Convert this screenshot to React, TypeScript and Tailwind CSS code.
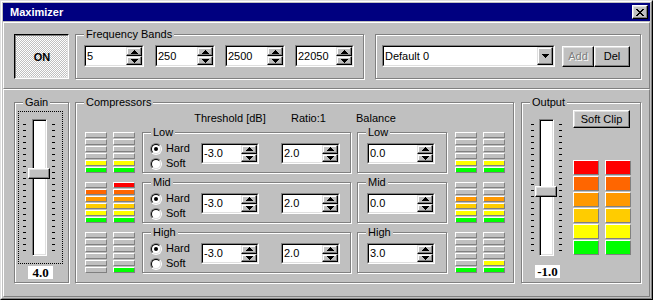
import React from "react";

const raised =
  "border border-t-white border-l-white border-r-black border-b-black bg-[#c0c0c0] shadow-[inset_-1px_-1px_0_#808080,inset_1px_1px_0_#dfdfdf]";
const raisedSmall =
  "border border-t-[#dfdfdf] border-l-[#dfdfdf] border-r-black border-b-black bg-[#c0c0c0] shadow-[inset_-1px_-1px_0_#808080,inset_1px_1px_0_#fff]";
const sunkenOuter = "border border-t-[#808080] border-l-[#808080] border-r-white border-b-white";
const sunkenInner = "border border-t-black border-l-black border-r-[#dfdfdf] border-b-[#dfdfdf]";

const segBg: Record<string, string> = {
  "-": "bg-[#c0c0c0]",
  R: "bg-[#ff0000]",
  O: "bg-[#ff6600]",
  A: "bg-[#ff9900]",
  D: "bg-[#ffcc00]",
  Y: "bg-[#ffff00]",
  G: "bg-[#00ff00]",
};

const bands = [
  { name: "Low", thr: "-3.0", ratio: "2.0", bal: "0.0", left: ["----YG", "----YG"], right: ["----YG", "----YG"] },
  { name: "Mid", thr: "-3.0", ratio: "2.0", bal: "0.0", left: ["-OADYG", "ROADYG"], right: ["--ADYG", "--ADYG"] },
  { name: "High", thr: "-3.0", ratio: "2.0", bal: "3.0", left: ["------", "-----G"], right: ["-----G", "----YG"] },
];

function Arrow({ down }: { down?: boolean }) {
  return (
    <svg width="7" height="4" viewBox="0 0 7 4" shapeRendering="crispEdges">
      <path
        d={down ? "M0 0h7v1H0zM1 1h5v1H1zM2 2h3v1H2zM3 3h1v1H3z" : "M3 0h1v1H3zM2 1h3v1H2zM1 2h5v1H1zM0 3h7v1H0z"}
        fill="#000"
      />
    </svg>
  );
}

function CloseX() {
  return (
    <svg width="8" height="7" viewBox="0 0 8 7" shapeRendering="crispEdges">
      <path
        d="M0 0h2v1H0zM6 0h2v1H6zM1 1h2v1H1zM5 1h2v1H5zM2 2h4v1H2zM3 3h2v1H3zM2 4h4v1H2zM1 5h2v1H1zM5 5h2v1H5zM0 6h2v1H0zM6 6h2v1H6z"
        fill="#000"
      />
    </svg>
  );
}

function SpinEdit({ value, className }: { value: string; className: string }) {
  return (
    <div className={`${sunkenOuter} ${className}`}>
      <div className={`${sunkenInner} flex h-full bg-white`}>
        <span className="flex-1 self-center pl-[1px]">{value}</span>
        <div className="flex w-[16px] flex-col">
          <div className={`${raisedSmall} flex flex-1 items-center justify-center`}>
            <Arrow />
          </div>
          <div className={`${raisedSmall} flex flex-1 items-center justify-center`}>
            <Arrow down />
          </div>
        </div>
      </div>
    </div>
  );
}

function GroupBox({ label, className, children }: { label?: string; className: string; children?: React.ReactNode }) {
  return (
    <div className={`relative border border-[#808080] shadow-[inset_1px_1px_0_#fff,1px_1px_0_#fff] ${className}`}>
      {label && <span className="absolute -top-[7px] left-[8px] bg-[#c0c0c0] px-[2px] leading-[13px]">{label}</span>}
      {children}
    </div>
  );
}

function Radio({ checked, label }: { checked?: boolean; label: string }) {
  return (
    <div className="flex h-[15px] items-center gap-[4px]">
      <div className="flex h-[12px] w-[12px] items-center justify-center rounded-full border border-t-[#808080] border-l-[#808080] border-r-white border-b-white">
        <div className="flex h-[10px] w-[10px] items-center justify-center rounded-full border border-t-black border-l-black border-r-[#dfdfdf] border-b-[#dfdfdf] bg-white">
          {checked && <div className="h-[4px] w-[4px] rounded-full bg-black" />}
        </div>
      </div>
      <span>{label}</span>
    </div>
  );
}

function Meter({ segs, big }: { segs: string; big?: boolean }) {
  return (
    <div className={`flex flex-col gap-[1px] ${big ? "w-[26px]" : "w-[22px]"}`}>
      {segs.split("").map((s, i) => (
        <div
          key={i}
          className={`${big ? "h-[15px]" : "h-[6px]"} border border-t-white border-l-white border-r-[#808080] border-b-[#808080] ${segBg[s]}`}
        />
      ))}
    </div>
  );
}

function Ticks() {
  return (
    <div className="mt-[5px] flex h-[127px] w-[3px] flex-col justify-between">
      {Array.from({ length: 22 }).map((_, i) => (
        <div key={i} className="h-[1px] bg-black" />
      ))}
    </div>
  );
}

function VSlider({ idx, trackGap }: { idx: number; trackGap: string }) {
  return (
    <div className="flex items-start">
      <Ticks />
      <div
        className={`relative ${trackGap} mr-[5px] h-[137px] w-[15px] border border-t-[#808080] border-l-[#808080] border-r-white border-b-white bg-white shadow-[inset_1px_1px_0_#000,inset_-1px_-1px_0_#dfdfdf]`}
      >
        <div className={`absolute -left-[5px] h-[11px] w-[22px] ${raised}`} style={{ top: idx * 6 }} />
      </div>
      <Ticks />
    </div>
  );
}

function ValueBox({ value }: { value: string }) {
  return (
    <div className="flex h-[13px] w-[25px] items-center justify-center bg-white font-['Liberation_Serif',serif] text-[13px] font-bold">
      {value}
    </div>
  );
}

export default function App() {
  return (
    <div className="h-[300px] w-[653px] border border-t-[#dfdfdf] border-l-[#dfdfdf] border-r-black border-b-black bg-[#c0c0c0] font-['Liberation_Sans',Arial,sans-serif] text-[11px] leading-[13px] text-black">
      <div className="flex h-full flex-col border border-t-white border-l-white border-r-[#808080] border-b-[#808080] p-[1px]">
        {/* title */}
        <div className="flex h-[18px] items-center justify-between bg-[#000080] pl-[7px] pr-[2px]">
          <span className="font-bold text-white">Maximizer</span>
          <div className={`flex h-[14px] w-[16px] items-center justify-center ${raised}`}>
            <CloseX />
          </div>
        </div>

        {/* top panel */}
        <div className="mt-[1px] flex h-[67px] items-start border border-t-white border-l-white border-r-[#808080] border-b-[#808080] pl-[10px] pt-[11px]">
          <div className="flex h-[45px] w-[55px] items-center justify-center border border-t-black border-l-black border-r-white border-b-white bg-[image:repeating-conic-gradient(#c0c0c0_0%_25%,#fff_0%_50%)] bg-size-[2px_2px] pl-[1px] pt-[2px] font-bold shadow-[inset_1px_1px_0_#808080,inset_-1px_-1px_0_#dfdfdf]">
            ON
          </div>
          <GroupBox label="Frequency Bands" className="ml-[6px] flex h-[45px] w-[289px] items-start gap-[10px] pl-[8px] pt-[10px]">
            <SpinEdit value="5" className="mr-[1px] h-[22px] w-[60px]" />
            <SpinEdit value="250" className="h-[22px] w-[60px]" />
            <SpinEdit value="2500" className="h-[22px] w-[60px]" />
            <SpinEdit value="22050" className="h-[22px] w-[59px]" />
          </GroupBox>
          <GroupBox className="ml-[11px] flex h-[45px] w-[266px] items-start pl-[6px] pt-[10px]">
            <div className={`${sunkenOuter} h-[22px] w-[173px]`}>
              <div className={`${sunkenInner} flex h-full bg-white`}>
                <span className="flex-1 self-center pl-[1px]">Default 0</span>
                <div className={`${raisedSmall} flex w-[16px] items-center justify-center`}>
                  <Arrow down />
                </div>
              </div>
            </div>
            <div className={`ml-[7px] mt-[1px] flex h-[21px] w-[32px] items-center justify-center text-[#808080] [text-shadow:1px_1px_0_#fff] ${raised}`}>
              Add
            </div>
            <div className={`mt-[1px] flex h-[21px] w-[36px] items-center justify-center ${raised}`}>Del</div>
          </GroupBox>
        </div>

        {/* bottom panel */}
        <div className="flex flex-1 items-start border border-t-white border-l-white border-r-[#808080] border-b-[#808080] pl-[10px] pt-[12px]">
          <GroupBox label="Gain" className="h-[181px] w-[55px] pl-[3px] pt-[8px]">
            <div className="h-[153px] w-[45px] border border-dotted border-black pl-[4px] pt-[7px]">
              <VSlider idx={8} trackGap="ml-[6px]" />
            </div>
            <div className="ml-[10px] mt-[2px]">
              <ValueBox value="4.0" />
            </div>
          </GroupBox>

          <GroupBox label="Compressors" className="ml-[6px] h-[181px] w-[439px] pl-[9px] pt-[9px]">
            <div className="flex h-[13px]">
              <span className="ml-[99px] w-[92px] text-center">Threshold [dB]</span>
              <span className="w-[65px] text-center">Ratio:1</span>
              <span className="ml-[15px]">Balance</span>
            </div>
            <div className="mt-[7px] flex flex-col gap-[9px]">
              {bands.map((b) => (
                <div key={b.name} className="flex h-[41px] items-start">
                  <div className="flex gap-[6px]">
                    <Meter segs={b.left[0]} />
                    <Meter segs={b.left[1]} />
                  </div>
                  <GroupBox label={b.name} className="ml-[7px] flex h-[41px] w-[209px] items-start pl-[7px] pt-[8px]">
                    <div className="flex w-[51px] flex-col">
                      <Radio checked label="Hard" />
                      <Radio label="Soft" />
                    </div>
                    <SpinEdit value={b.thr} className="mt-[2px] h-[21px] w-[58px]" />
                    <SpinEdit value={b.ratio} className="ml-[22px] mt-[2px] h-[21px] w-[59px]" />
                  </GroupBox>
                  <GroupBox label={b.name} className="ml-[6px] h-[41px] w-[90px] pl-[9px] pt-[10px]">
                    <SpinEdit value={b.bal} className="h-[21px] w-[68px]" />
                  </GroupBox>
                  <div className="ml-[8px] flex gap-[6px]">
                    <Meter segs={b.right[0]} />
                    <Meter segs={b.right[1]} />
                  </div>
                </div>
              ))}
            </div>
          </GroupBox>

          <GroupBox label="Output" className="ml-[7px] flex h-[181px] w-[120px] items-start pl-[9px]">
            <div className="flex flex-col pt-[16px]">
              <VSlider idx={11} trackGap="ml-[5px]" />
              <div className="ml-[4px] mt-[9px]">
                <ValueBox value="-1.0" />
              </div>
            </div>
            <div className="ml-[11px] flex flex-col pt-[7px]">
              <div className={`flex h-[18px] w-[57px] items-center justify-center ${raised}`}>Soft Clip</div>
              <div className="mt-[32px] flex gap-[6px]">
                <Meter big segs="ROADYG" />
                <Meter big segs="ROADYG" />
              </div>
            </div>
          </GroupBox>
        </div>
      </div>
    </div>
  );
}
